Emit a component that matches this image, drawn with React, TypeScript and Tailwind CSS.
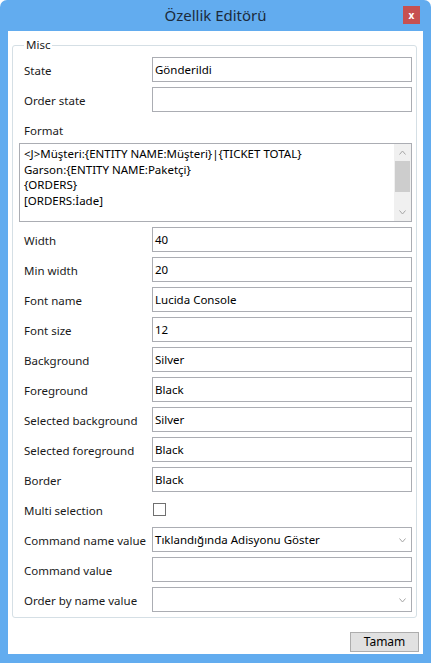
import React from 'react';

const font = { fontFamily: '"Noto Sans", "Open Sans", sans-serif' };

function Chevron({ up }: { up?: boolean }) {
    return (
        <svg width="7" height="5" viewBox="0 0 7 5" className="text-[#a6a6a6]">
            <path d={up ? 'M0.5 4.5 L3.5 1 L6.5 4.5' : 'M0.5 0.5 L3.5 4 L6.5 0.5'} fill="none" stroke="currentColor" strokeWidth="1" />
        </svg>
    );
}

function Row({ label, value, combo }: { label: string; value?: string; combo?: boolean }) {
    return (
        <div className="flex h-[25px] items-center">
            <div className="w-[133px] pl-[5px] pt-[3px] text-[11.5px] text-[#1a1a1a]">{label}</div>
            <div className="flex h-full flex-1 items-center border border-[#abadb3] bg-white pl-[2px] text-[11.5px] text-black">
                <span className="flex-1 pt-[1px]">{value}</span>
                {combo && (
                    <span className="flex w-[17px] justify-center pt-[1px]">
                        <Chevron />
                    </span>
                )}
            </div>
        </div>
    );
}

export default function App() {
    const rows1 = [
        ['Width', '40'],
        ['Min width', '20'],
        ['Font name', 'Lucida Console'],
        ['Font size', '12'],
        ['Background', 'Silver'],
        ['Foreground', 'Black'],
        ['Selected background', 'Silver'],
        ['Selected foreground', 'Black'],
        ['Border', 'Black'],
    ];

    return (
        <div className="flex h-[663px] w-[431px] flex-col rounded-t-[7px] bg-[#62acef] px-[8px] pb-[9px]" style={font}>
            {/* title bar */}
            <div className="relative flex h-[31px] items-center justify-center">
                <span className="text-[15px] text-[#1b2b3c]">Özellik Editörü</span>
                <div className="absolute right-[3px] top-[6px] flex h-[18px] w-[17px] items-center justify-center bg-[#c75050] text-[10px] font-bold leading-none text-white">
                    x
                </div>
            </div>

            <div className="flex flex-1 flex-col bg-white">
                <fieldset className="ml-[4px] mr-[6px] mt-[6px] rounded-[3px] border border-[#d5dfe5] pb-[5px] pl-[6px] pr-[4px]">
                    <legend className="ml-[5px] px-[2px] text-[11.5px] leading-[16px] text-[#1a1a1a]">Misc</legend>
                    <div className="flex flex-col gap-[5px] pt-[4px]">
                        <Row label="State" value="Gönderildi" />
                        <Row label="Order state" />
                        <div className="flex h-[21px] items-end pl-[5px] text-[11.5px] leading-[14px] text-[#1a1a1a]">Format</div>
                        <div className="flex h-[79px] border border-[#abadb3] bg-white">
                            <div className="flex-1 pl-[4px] pt-[2px] text-[11.5px] leading-[15.5px] text-black">
                                <div>{'<J>Müşteri:{ENTITY NAME:Müşteri}|{TICKET TOTAL}'}</div>
                                <div>{'Garson:{ENTITY NAME:Paketçi}'}</div>
                                <div>{'{ORDERS}'}</div>
                                <div>{'[ORDERS:İade]'}</div>
                            </div>
                            <div className="flex w-[17px] flex-col bg-[#f0f0f0]">
                                <div className="flex h-[17px] items-center justify-center">
                                    <Chevron up />
                                </div>
                                <div className="mx-[1px] h-[31px] bg-[#cdcdcd]" />
                                <div className="flex-1" />
                                <div className="flex h-[17px] items-center justify-center">
                                    <Chevron />
                                </div>
                            </div>
                        </div>
                        {rows1.map(([l, v]) => (
                            <Row key={l} label={l} value={v} />
                        ))}
                        <div className="flex h-[25px] items-center">
                            <div className="w-[133px] pl-[5px] pt-[3px] text-[11.5px] text-[#1a1a1a]">Multi selection</div>
                            <div className="ml-[1px] h-[13px] w-[13px] border border-[#707070] bg-white" />
                        </div>
                        <Row label="Command name value" value="Tıklandığında Adisyonu Göster" combo />
                        <Row label="Command value" />
                        <Row label="Order by name value" combo />
                    </div>
                </fieldset>

                <div className="mt-auto flex justify-end pb-[2px] pr-[4px]">
                    <button className="h-[20px] w-[69px] border border-[#adadad] bg-[#e1e1e1] text-[12px] leading-none text-black">
                        Tamam
                    </button>
                </div>
            </div>
        </div>
    );
}
